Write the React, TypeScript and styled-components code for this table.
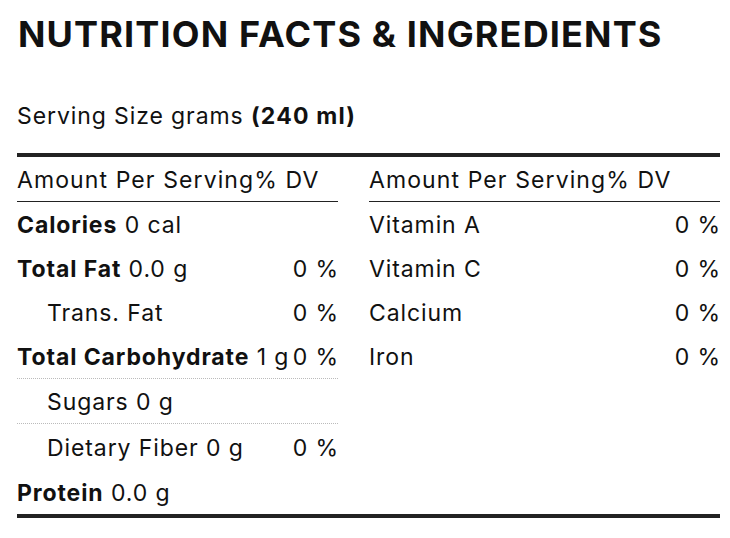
import React from "react";
import styled, { createGlobalStyle } from "styled-components";

const Global = createGlobalStyle`
  html, body { margin: 0; padding: 0; background: #fff; }
  body { font-family: Inter, "Open Sans", sans-serif; color: #111; }
`;

const Page = styled.div`
  width: 730px;
  padding: 12px 10px 0 17px;
  box-sizing: border-box;
`;

const Title = styled.h2`
  margin: 0 0 0 1px;
  font-size: 36px;
  line-height: 44px;
  font-weight: 700;
  letter-spacing: 1.15px;
`;

const Serving = styled.p`
  margin: 45px 0 0;
  font-size: 23px;
  line-height: 30px;
  font-weight: 400;
  letter-spacing: 0.9px;
  b { font-weight: 700; letter-spacing: 1.2px; }
`;

const Table = styled.div`
  margin-top: 22px;
  border-top: 4px solid #222;
  border-bottom: 4px solid #222;
  display: grid;
  grid-template-columns: 321px 351px;
  column-gap: 31px;
  align-items: start;
`;

const Column = styled.div`
  display: flex;
  flex-direction: column;
`;

const Head = styled.div`
  height: 42px;
  padding-top: 2px;
  display: flex;
  align-items: center;
  border-bottom: 1px solid #222;
  font-size: 23px;
  letter-spacing: 1.1px;
`;

const Row = styled.div<{ $indent?: boolean; $dotted?: boolean; $tall?: boolean }>`
  height: ${(p) => (p.$tall ? 43 : 42)}px;
  padding-top: 2px;
  display: flex;
  align-items: center;
  justify-content: space-between;
  font-size: 23px;
  letter-spacing: 0.9px;
  padding-left: ${(p) => (p.$indent ? 30 : 0)}px;
  border-bottom: ${(p) => (p.$dotted ? "1px dotted #bbb" : "none")};
  white-space: nowrap;
`;

const Label = styled.span`
  b { font-weight: 700; }
`;

const Value = styled.span`
  text-align: right;
  margin-right: -0.9px;
`;

export default function App() {
  return (
    <Page>
      <Global />
      <Title>NUTRITION FACTS &amp; INGREDIENTS</Title>
      <Serving>
        Serving Size grams <b>(240 ml)</b>
      </Serving>
      <Table>
        <Column>
          <Head>Amount Per Serving% DV</Head>
          <Row>
            <Label><b>Calories</b> 0 cal</Label>
          </Row>
          <Row>
            <Label><b>Total Fat</b> 0.0 g</Label>
            <Value>0 %</Value>
          </Row>
          <Row $indent>
            <Label>Trans. Fat</Label>
            <Value>0 %</Value>
          </Row>
          <Row $dotted>
            <Label><b>Total Carbohydrate</b> 1 g</Label>
            <Value>0 %</Value>
          </Row>
          <Row $indent $dotted>
            <Label>Sugars 0 g</Label>
          </Row>
          <Row $indent $tall>
            <Label>Dietary Fiber 0 g</Label>
            <Value>0 %</Value>
          </Row>
          <Row $tall>
            <Label><b>Protein</b> 0.0 g</Label>
          </Row>
        </Column>
        <Column>
          <Head>Amount Per Serving% DV</Head>
          <Row>
            <Label>Vitamin A</Label>
            <Value>0 %</Value>
          </Row>
          <Row>
            <Label>Vitamin C</Label>
            <Value>0 %</Value>
          </Row>
          <Row>
            <Label>Calcium</Label>
            <Value>0 %</Value>
          </Row>
          <Row>
            <Label>Iron</Label>
            <Value>0 %</Value>
          </Row>
        </Column>
      </Table>
    </Page>
  );
}
